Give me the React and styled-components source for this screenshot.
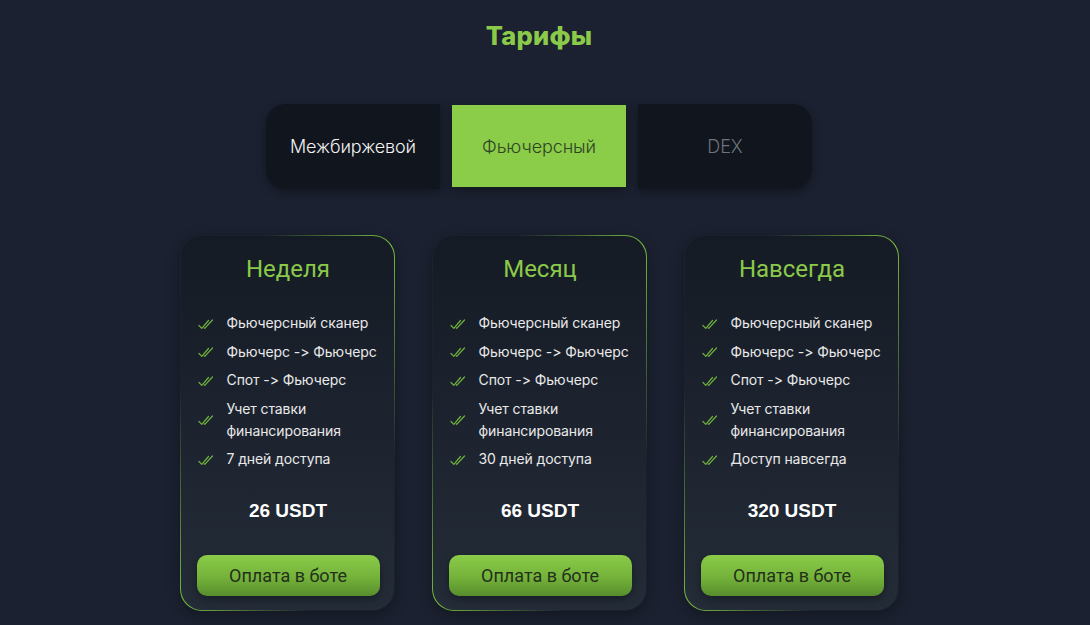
import React from 'react'
import styled, { createGlobalStyle } from 'styled-components'

const GlobalStyle = createGlobalStyle`
    body {
        margin: 0;
        background: #1b2130;
        font-family: "Noto Sans", sans-serif;
    }
`

const plans = [
    {
        title: 'Неделя',
        features: ['Фьючерсный сканер', 'Фьючерс -> Фьючерс', 'Спот -> Фьючерс', 'Учет ставки финансирования', '7 дней доступа'],
        price: '26 USDT',
    },
    {
        title: 'Месяц',
        features: ['Фьючерсный сканер', 'Фьючерс -> Фьючерс', 'Спот -> Фьючерс', 'Учет ставки финансирования', '30 дней доступа'],
        price: '66 USDT',
    },
    {
        title: 'Навсегда',
        features: ['Фьючерсный сканер', 'Фьючерс -> Фьючерс', 'Спот -> Фьючерс', 'Учет ставки финансирования', 'Доступ навсегда'],
        price: '320 USDT',
    },
]

const tabs = ['Межбиржевой', 'Фьючерсный', 'DEX']

function DoubleCheck() {
    return (
        <svg width="17" height="12" viewBox="0 0 17 12" fill="none">
            <path d="M1 7.5 L3.8 10.3 L10.5 2.5" stroke="#6fb33c" strokeWidth="1.2" strokeLinecap="round" strokeLinejoin="round" />
            <path d="M6.2 9.8 L6.7 10.3 L14.5 2" stroke="#6fb33c" strokeWidth="1.2" strokeLinecap="round" strokeLinejoin="round" />
        </svg>
    )
}

function PlanCard({ title, features, price }) {
    return (
        <Card>
            <CardTitle>{title}</CardTitle>
            <Features>
                {features.map((f) => (
                    <Feature key={f}>
                        <DoubleCheck />
                        <span>{f}</span>
                    </Feature>
                ))}
            </Features>
            <Price>{price}</Price>
            <PayButton>Оплата в боте</PayButton>
        </Card>
    )
}

export default function App() {
    return (
        <Page>
            <GlobalStyle />
            <Heading>Тарифы</Heading>
            <Tabs>
                {tabs.map((t, i) => (
                    <Tab key={t} active={i === 1} pos={i === 0 ? 'first' : i === tabs.length - 1 ? 'last' : 'mid'} muted={i === 2}>
                        {t}
                    </Tab>
                ))}
            </Tabs>
            <Cards>
                {plans.map((p) => (
                    <PlanCard key={p.title} {...p} />
                ))}
            </Cards>
        </Page>
    )
}

const Page = styled.div`
    width: 1090px;
    height: 625px;
    overflow: hidden;
    display: flex;
    flex-direction: column;
    align-items: center;
    padding: 18px 12px 0 0;
    box-sizing: border-box;
`

const Heading = styled.h1`
    margin: 0;
    font-family: Inter, sans-serif;
    font-weight: 800;
    font-size: 25.5px;
    line-height: 36px;
    color: #8bc94a;
    letter-spacing: 0.2px;
`

const Tabs = styled.div`
    display: flex;
    gap: 12px;
    margin-top: 50px;
`

const Tab = styled.div`
    width: 174px;
    height: ${p => (p.active ? '82px' : '85px')};
    margin-top: ${p => (p.active ? '1px' : '0')};
    display: flex;
    align-items: center;
    justify-content: center;
    font-family: Inter, sans-serif;
    font-size: 18px;
    font-weight: 300;
    letter-spacing: -0.1px;
    background: ${p => (p.active ? '#8bcc49' : '#10151e')};
    color: ${p => (p.active ? '#2f4424' : p.muted ? '#6d737c' : '#f2f2f2')};
    border-radius: ${p => (p.pos === 'first' ? '20px 0 0 20px' : p.pos === 'last' ? '0 20px 20px 0' : '0')};
    box-shadow: 0 3px 10px rgba(0, 0, 0, 0.35);
`

const Cards = styled.div`
    display: flex;
    gap: 37px;
    margin-top: 46px;
`

const Card = styled.div`
    width: 215px;
    height: 376px;
    box-sizing: border-box;
    border: 1px solid transparent;
    border-radius: 22px;
    background:
        linear-gradient(180deg, #151b24 0%, #1d2430 55%, #242c38 100%) padding-box,
        linear-gradient(to bottom right, rgba(122, 190, 64, 0) 20%, #7abe40 50%, rgba(122, 190, 64, 0) 80%) border-box;
    box-shadow: 0 4px 14px rgba(0, 0, 0, 0.3);
    display: flex;
    flex-direction: column;
    align-items: center;
    padding: 18px 15px 14px 17px;
`

const CardTitle = styled.h2`
    margin: 0;
    font-family: Roboto, sans-serif;
    font-weight: 400;
    font-size: 24px;
    line-height: 30px;
    color: #8bc94a;
`

const Features = styled.ul`
    list-style: none;
    margin: 28px 0 0 0;
    padding: 0;
    align-self: stretch;
    display: flex;
    flex-direction: column;
    gap: 6.5px;
`

const Feature = styled.li`
    display: flex;
    align-items: center;
    gap: 12px;
    font-family: Inter, sans-serif;
    font-size: 14px;
    line-height: 22px;
    color: #e9e9e9;
    letter-spacing: -0.1px;

    svg {
        flex-shrink: 0;
        margin-top: 1px;
    }
`

const Price = styled.div`
    margin-top: 29px;
    font-family: "Liberation Sans", Arial, sans-serif;
    font-weight: 700;
    font-size: 19px;
    line-height: 24px;
    color: #ffffff;
`

const PayButton = styled.button`
    margin-top: auto;
    width: 183px;
    height: 41px;
    border: none;
    border-radius: 10px;
    background: linear-gradient(180deg, #8acb48 0%, #74b23a 55%, #578d2d 100%);
    box-shadow: 0 3px 8px rgba(0, 0, 0, 0.35);
    font-family: Roboto, sans-serif;
    font-size: 18px;
    color: #23301b;
    cursor: pointer;
`
